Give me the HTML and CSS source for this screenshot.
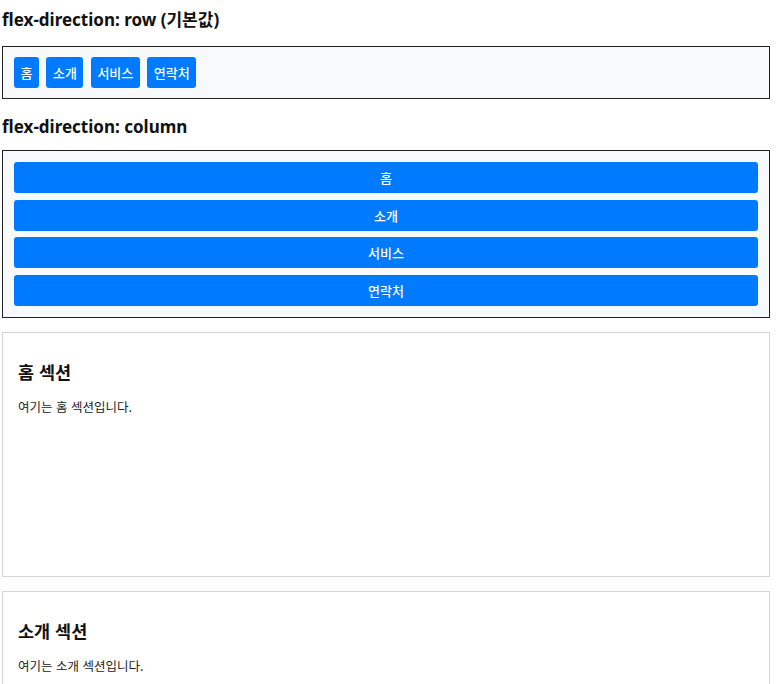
FILE: index.html
```html
<!DOCTYPE html>
<html lang="ko">
<head>
<meta charset="utf-8">
<title>flex-direction</title>
<link rel="stylesheet" href="styles.css">
</head>
<body>
  <h2 class="title title-first">flex-direction: row (기본값)</h2>
  <nav class="nav nav-row">
    <a class="btn" href="#home">홈</a>
    <a class="btn" href="#about">소개</a>
    <a class="btn" href="#service">서비스</a>
    <a class="btn" href="#contact">연락처</a>
  </nav>

  <h2 class="title title-second">flex-direction: column</h2>
  <nav class="nav nav-column">
    <a class="btn" href="#home">홈</a>
    <a class="btn" href="#about">소개</a>
    <a class="btn" href="#service">서비스</a>
    <a class="btn" href="#contact">연락처</a>
  </nav>

  <section class="section" id="home">
    <h3 class="section-title">홈 섹션</h3>
    <p class="section-text">여기는 홈 섹션입니다.</p>
  </section>
  <section class="section" id="about">
    <h3 class="section-title">소개 섹션</h3>
    <p class="section-text">여기는 소개 섹션입니다.</p>
  </section>
</body>
</html>
```
FILE: styles.css
```css
html, body {
  margin: 0;
  padding: 0;
  background: #ffffff;
}
body {
  padding: 0 7px 0 2px;
  font-family: "Noto Sans", "Noto Sans CJK KR", sans-serif;
  color: #111111;
}
.title {
  margin: 0;
  font-size: 17px;
  line-height: 24px;
  font-weight: 700;
  color: #111111;
}
.title-first {
  padding-top: 8px;
  margin-bottom: 14px;
}
.title-second {
  margin-top: 16px;
  margin-bottom: 11px;
}
.nav {
  display: flex;
  border: 1px solid #222222;
  background: #f8f9fa;
}
.nav-row {
  flex-direction: row;
  gap: 7.5px;
  padding: 10px 11px;
}
.nav-column {
  flex-direction: column;
  gap: 6.5px;
  padding: 11px;
}
.btn {
  display: flex;
  align-items: center;
  justify-content: center;
  height: 31px;
  padding: 0 6.5px;
  background: #007bff;
  color: #ffffff;
  text-decoration: none;
  font-family: "Noto Sans CJK KR", sans-serif;
  font-size: 13px;
  font-weight: 500;
  border-radius: 3px;
}
.section {
  margin-top: 14.5px;
  height: 243px;
  border: 1px solid #d4d4d4;
  padding: 0 15px;
  background: #ffffff;
}
.section + .section {
  margin-top: 14px;
}
.section-title {
  margin: 26px 0 0;
  font-family: "Noto Sans CJK KR", sans-serif;
  font-size: 17.5px;
  line-height: 26px;
  font-weight: 700;
  color: #111111;
}
.section-text {
  margin: 13px 0 0;
  font-family: "Noto Sans CJK KR", sans-serif;
  font-size: 12.5px;
  line-height: 17px;
  color: #222222;
}
```
